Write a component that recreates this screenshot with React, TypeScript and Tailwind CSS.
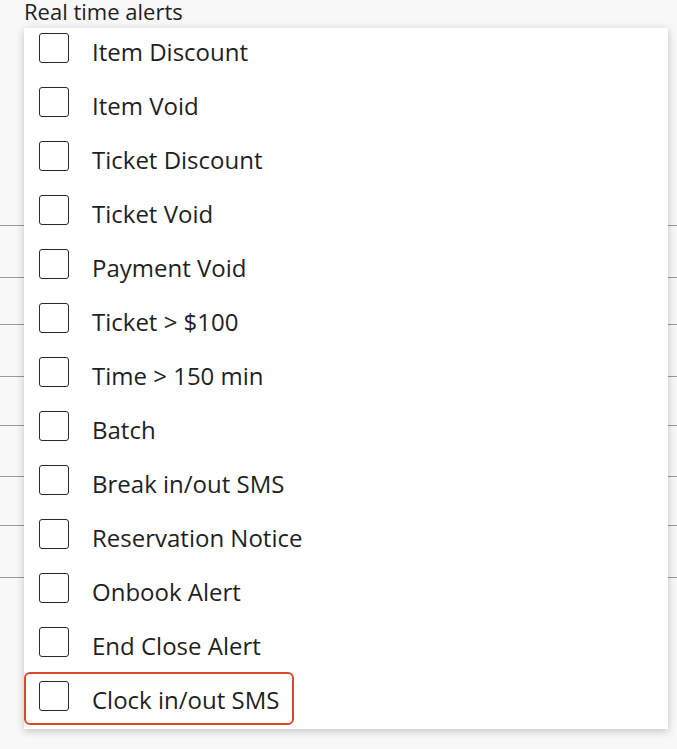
const alerts = [
  'Item Discount',
  'Item Void',
  'Ticket Discount',
  'Ticket Void',
  'Payment Void',
  'Ticket > $100',
  'Time > 150 min',
  'Batch',
  'Break in/out SMS',
  'Reservation Notice',
  'Onbook Alert',
  'End Close Alert',
  'Clock in/out SMS',
]

// rows of the settings table behind the open dropdown
const bgRows = [52, 47, 52, 49, 51, 49, 52]

export default function App() {
  return (
    <div
      className="relative h-[749px] w-[677px] overflow-hidden bg-[#f8f8f8] text-[#1f1f1f]"
      style={{ fontFamily: '"Open Sans", "Noto Sans", sans-serif' }}
    >
      <div className="pl-[24px] text-[22px] leading-[22px]">Real time alerts</div>

      {/* Background table */}
      <div className="mt-[203px] border-t border-[#9a9a9a]">
        {bgRows.map((h, i) => (
          <div
            key={i}
            className="border-b border-[#9a9a9a]"
            style={{ height: h }}
          />
        ))}
      </div>

      {/* Dropdown */}
      <div className="absolute left-[24px] top-[28px] h-[701px] w-[644px] overflow-hidden bg-white shadow-[0_2px_8px_rgba(0,0,0,0.22)]">
        {alerts.map((label, i) => (
          <div key={label} className="relative flex h-[54px] items-start pl-[15px]">
            {i === alerts.length - 1 && (
              <div className="absolute left-0 top-[-4px] h-[53px] w-[270px] rounded-[6px] border-[2.5px] border-[#d9482b]" />
            )}
            <div className="mt-[5px] h-[30px] w-[30px] shrink-0 rounded-[3px] border border-[#2a2a2a] bg-white" />
            <span className="ml-[23px] mt-[9px] text-[24px] leading-[30px]">{label}</span>
          </div>
        ))}
      </div>
    </div>
  )
}
